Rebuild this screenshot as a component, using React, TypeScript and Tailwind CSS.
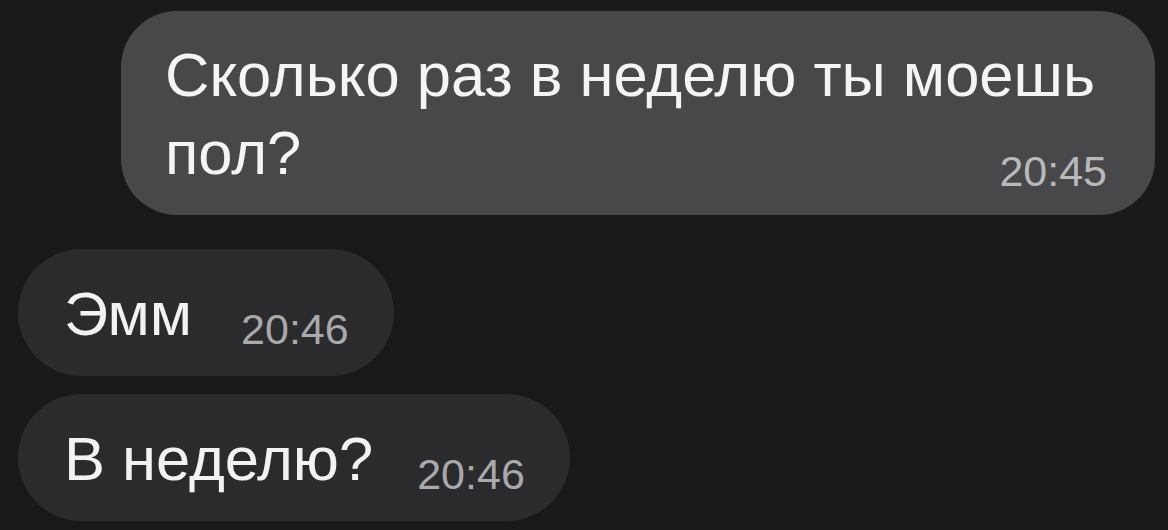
import React from 'react';

const font = { fontFamily: '"Liberation Sans", Arial, sans-serif' };

function Incoming({ text, time, gap }: { text: string; time: string; gap: string }) {
  return (
    <div className="flex">
      <div className="flex items-end rounded-full bg-[#2b2b2d] pl-[46px] pr-[45px] pt-[26px] pb-[23px]">
        <span className="text-[61.5px] leading-[78px] text-[#f2f2f2]">{text}</span>
        <span className={`text-[43px] leading-[43px] text-[#a9a9ac] mb-[2px] ${gap}`}>{time}</span>
      </div>
    </div>
  );
}

export default function App() {
  return (
    <div className="w-full h-[530px] bg-[#19191b] overflow-hidden flex flex-col" style={font}>
      {/* outgoing */}
      <div className="ml-[121px] mr-[13px] mt-[11px] rounded-[56px] bg-[#48484b] pl-[44px] pr-[48px] pt-[25px] pb-[23px] text-[#f4f4f4]">
        <div className="text-[61.5px] leading-[78px]">Сколько раз в неделю ты моешь</div>
        <div className="flex items-end justify-between">
          <span className="text-[61.5px] leading-[78px]">пол?</span>
          <span className="-mb-[1px] text-[43px] leading-[43px] text-[#b9b9bc]">20:45</span>
        </div>
      </div>

      {/* incoming */}
      <div className="mt-[34px] ml-[18px] flex flex-col gap-[18px]">
        <Incoming text="Эмм" time="20:46" gap="ml-[49px]" />
        <Incoming text="В неделю?" time="20:46" gap="ml-[44px]" />
      </div>
    </div>
  );
}
